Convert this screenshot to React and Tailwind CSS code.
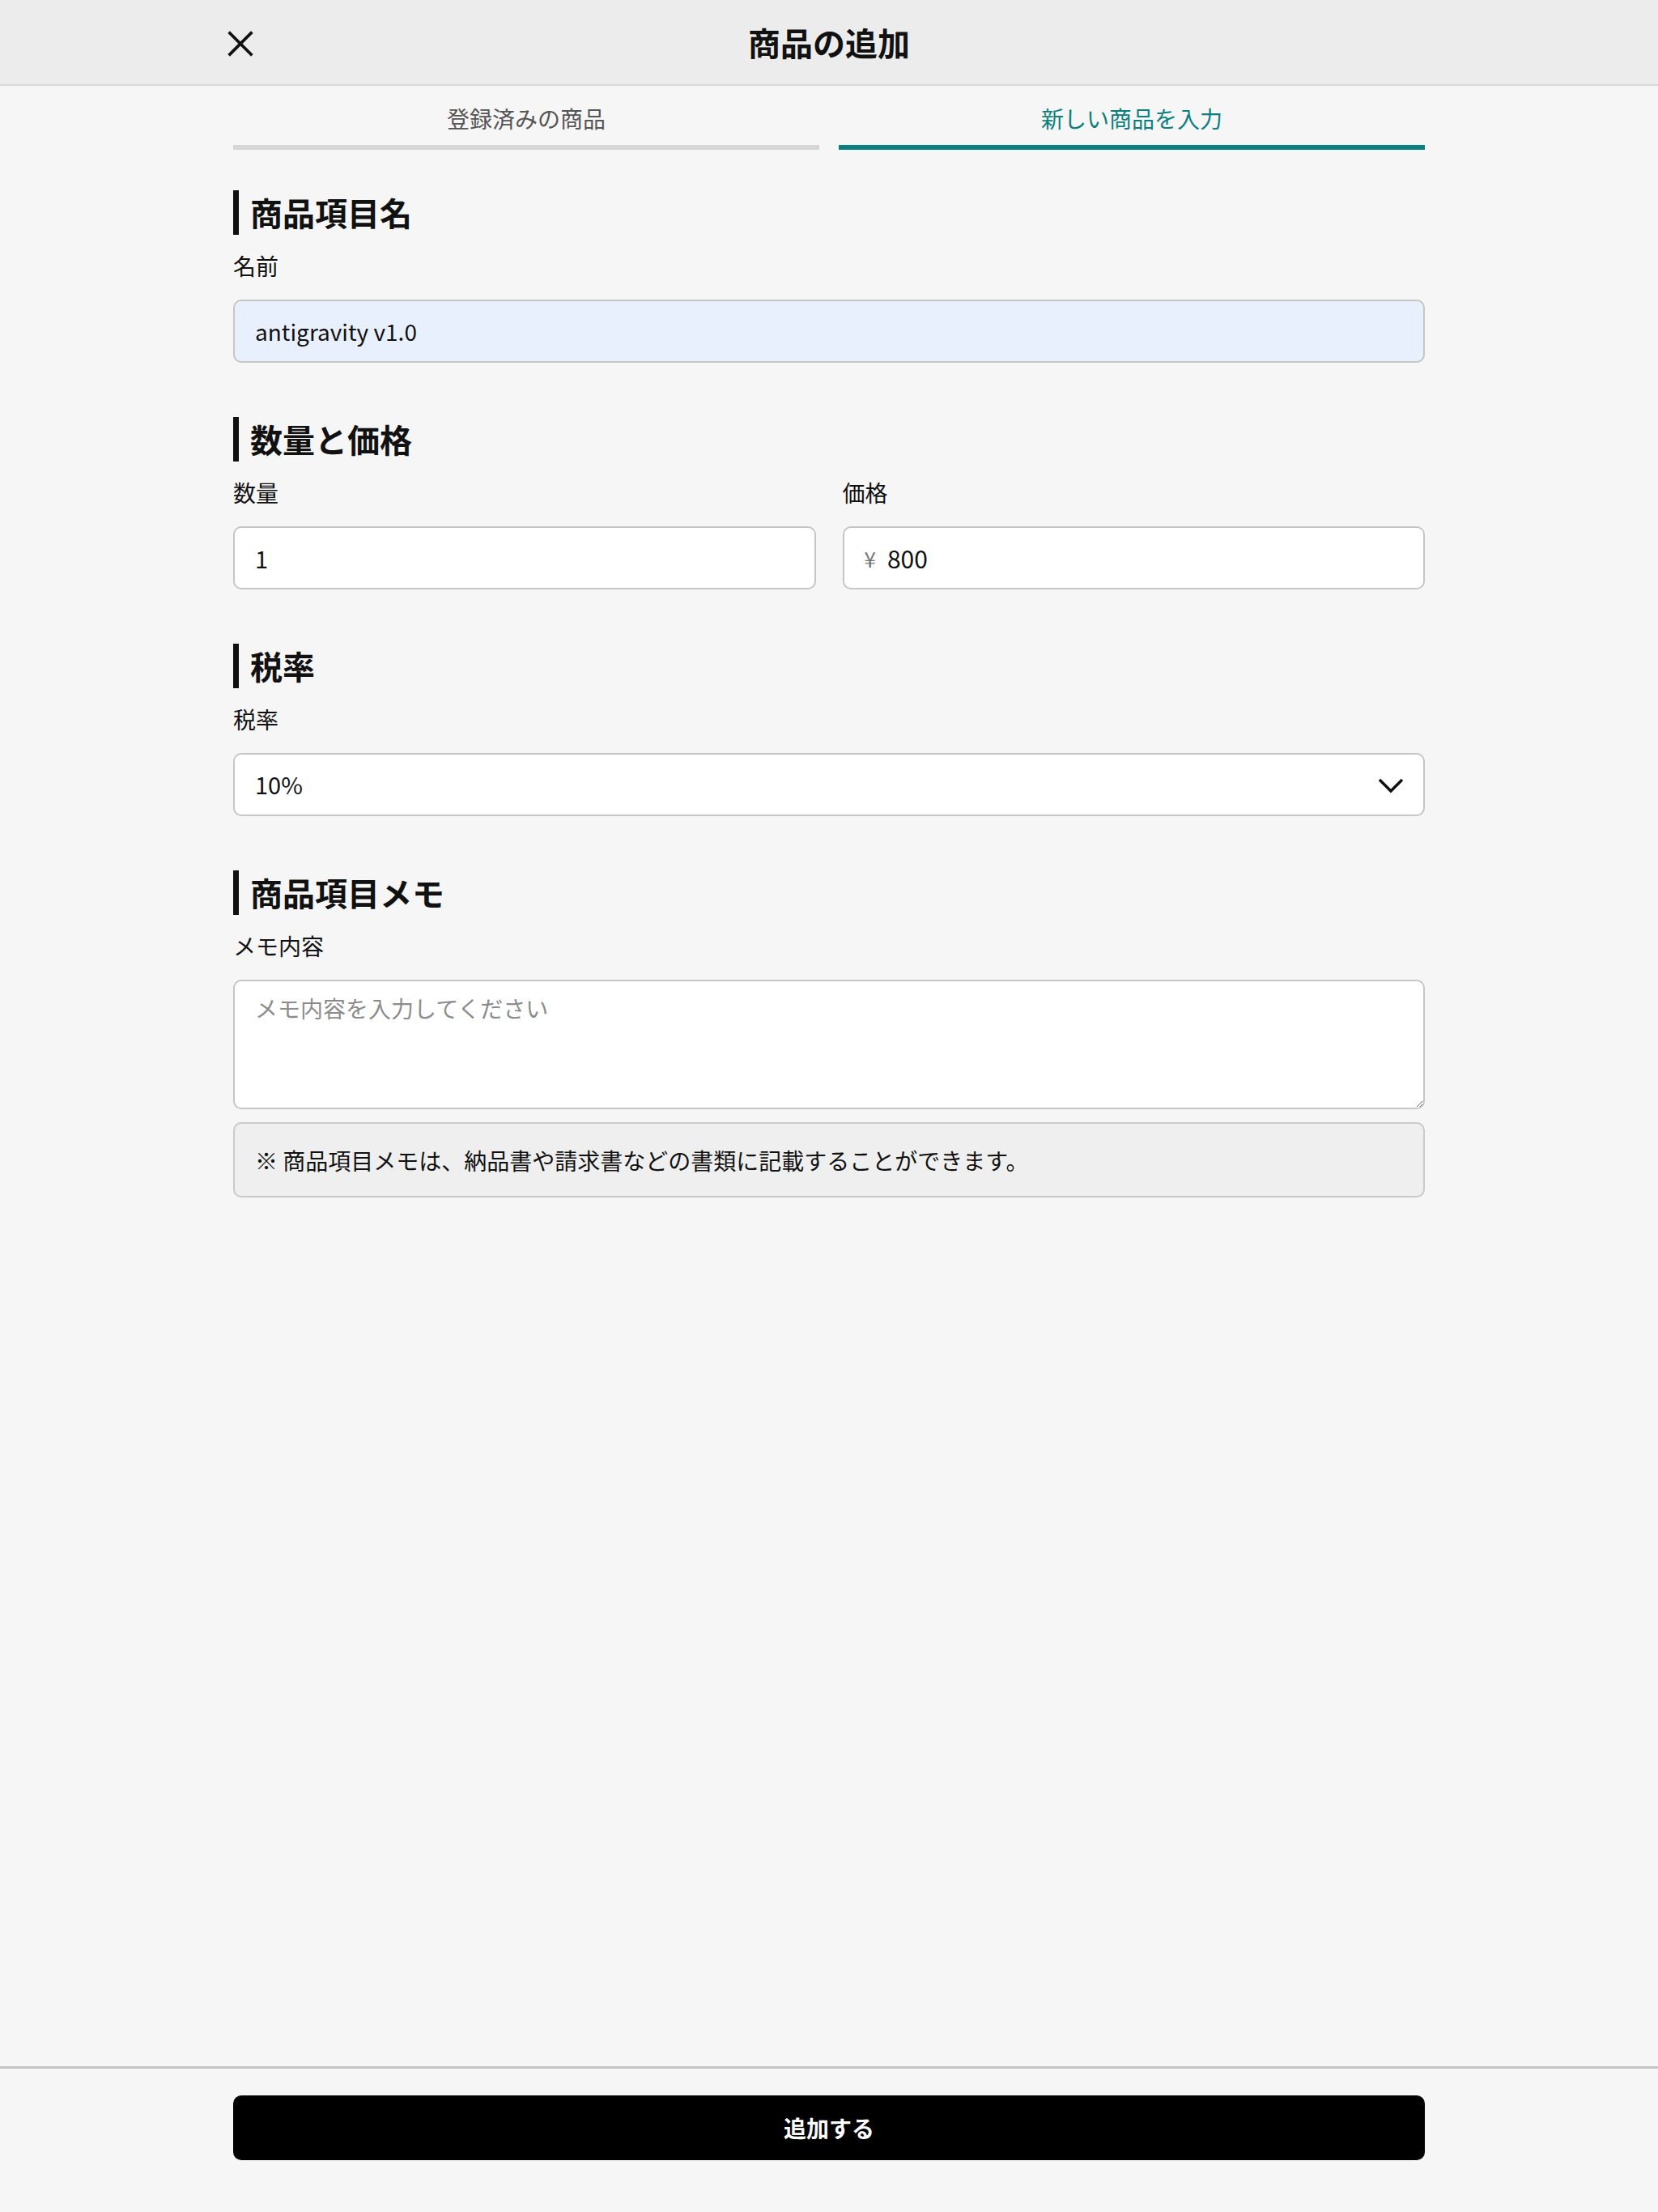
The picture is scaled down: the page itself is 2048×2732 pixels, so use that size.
import React, { useState } from 'react';

const SectionTitle = ({ children }) => (
  <h2 className="h-[55px] flex items-center border-l-[7px] border-[#111] pl-[14px] text-[40px] leading-[55px] font-bold text-[#111]">
    {children}
  </h2>
);

const Label = ({ children, htmlFor }) => (
  <label htmlFor={htmlFor} className="block mt-[18px] text-[28px] leading-[40px] text-[#111]">
    {children}
  </label>
);

const fieldBox =
  'mt-[22px] w-full h-[78px] rounded-[10px] border-2 border-[#c6c6c6] px-[25px] text-[28px] text-[#111] outline-none';

const App = () => {
  const [tab, setTab] = useState('new');
  const [name, setName] = useState('antigravity v1.0');
  const [qty, setQty] = useState('1');
  const [price, setPrice] = useState('800');
  const [tax, setTax] = useState('10');
  const [memo, setMemo] = useState('');

  return (
    <div className="min-h-screen flex flex-col bg-[#f6f6f6] text-[#111] font-['Noto_Sans_CJK_JP','Noto_Sans',sans-serif]">
      <header className="h-[106px] shrink-0 bg-[#ececec] border-b-2 border-[#d9d9d9]">
        <div className="w-[1472px] h-full mx-auto grid grid-cols-[1fr_auto_1fr] items-center">
          <button type="button" aria-label="閉じる" className="-ml-[7px] mt-[4px] w-[32px] h-[32px] flex items-center justify-center">
            <svg width="32" height="32" viewBox="0 0 32 32" fill="none" stroke="#111" strokeWidth="3.8" strokeLinecap="square">
              <path d="M3 3 L29 29 M29 3 L3 29" />
            </svg>
          </button>
          <h1 className="text-[40px] leading-[56px] font-bold">商品の追加</h1>
          <div />
        </div>
      </header>

      <nav className="w-[1472px] mx-auto flex gap-[24px]">
        <button
          type="button"
          onClick={() => setTab('registered')}
          className={`flex-1 pt-[20px] pb-[13px] text-[28px] leading-[40px] border-b-[6px] ${
            tab === 'registered' ? 'text-[#0b7f7f] border-[#0b7f7f]' : 'text-[#555] border-[#d6d6d6]'
          }`}
        >
          登録済みの商品
        </button>
        <button
          type="button"
          onClick={() => setTab('new')}
          className={`flex-1 pt-[20px] pb-[13px] text-[28px] leading-[40px] border-b-[6px] ${
            tab === 'new' ? 'text-[#0b7f7f] border-[#0b7f7f]' : 'text-[#555] border-[#d6d6d6]'
          }`}
        >
          新しい商品を入力
        </button>
      </nav>

      <main className="flex-1 w-[1472px] mx-auto pt-[50px] pb-[60px]">
        <section>
          <SectionTitle>商品項目名</SectionTitle>
          <Label htmlFor="name">名前</Label>
          <input
            id="name"
            value={name}
            onChange={(e) => setName(e.target.value)}
            className={`${fieldBox} bg-[#e8f0fe]`}
          />
        </section>

        <section className="mt-[67px]">
          <SectionTitle>数量と価格</SectionTitle>
          <div className="grid grid-cols-2 gap-[33px]">
            <div>
              <Label htmlFor="qty">数量</Label>
              <input
                id="qty"
                value={qty}
                onChange={(e) => setQty(e.target.value)}
                className={`${fieldBox} bg-white text-[29px]`}
              />
            </div>
            <div>
              <Label htmlFor="price">価格</Label>
              <div className={`${fieldBox} bg-white flex items-center gap-[14px]`}>
                <span className="text-[26px] text-[#777]">¥</span>
                <input
                  id="price"
                  value={price}
                  onChange={(e) => setPrice(e.target.value)}
                  className="flex-1 h-full bg-transparent outline-none text-[30px]"
                />
              </div>
            </div>
          </div>
        </section>

        <section className="mt-[67px]">
          <SectionTitle>税率</SectionTitle>
          <Label htmlFor="tax">税率</Label>
          <div className="relative">
            <select
              id="tax"
              value={tax}
              onChange={(e) => setTax(e.target.value)}
              className={`${fieldBox} bg-white appearance-none text-[29px]`}
            >
              <option value="10">10%</option>
              <option value="8">8%</option>
              <option value="0">0%</option>
            </select>
            <svg
              className="absolute right-[26px] top-[53px] pointer-events-none"
              width="32"
              height="20"
              viewBox="0 0 32 20"
              fill="none"
              stroke="#111"
              strokeWidth="3.5"
            >
              <path d="M2 2 L16 16 L30 2" />
            </svg>
          </div>
        </section>

        <section className="mt-[67px]">
          <SectionTitle>商品項目メモ</SectionTitle>
          <Label htmlFor="memo">メモ内容</Label>
          <textarea
            id="memo"
            value={memo}
            onChange={(e) => setMemo(e.target.value)}
            placeholder="メモ内容を入力してください"
            className="block mt-[22px] w-full h-[160px] rounded-[10px] border-2 border-[#c6c6c6] bg-white px-[25px] py-[13px] text-[28px] leading-[40px] outline-none placeholder:text-[#8c8c8c]"
          />
          <div className="mt-[16px] h-[93px] flex items-center rounded-[10px] border-2 border-[#cacaca] bg-[#efefef] px-[25px] text-[28px] text-[#111]">
            ※ 商品項目メモは、納品書や請求書などの書類に記載することができます。
          </div>
        </section>
      </main>

      <footer className="shrink-0 border-t-[3px] border-[#c6c6c6] pt-[33px] pb-[64px]">
        <button
          type="button"
          className="block w-[1472px] h-[80px] mx-auto rounded-[10px] bg-black text-white text-[28px] font-bold"
        >
          追加する
        </button>
      </footer>
    </div>
  );
};

export default App;
